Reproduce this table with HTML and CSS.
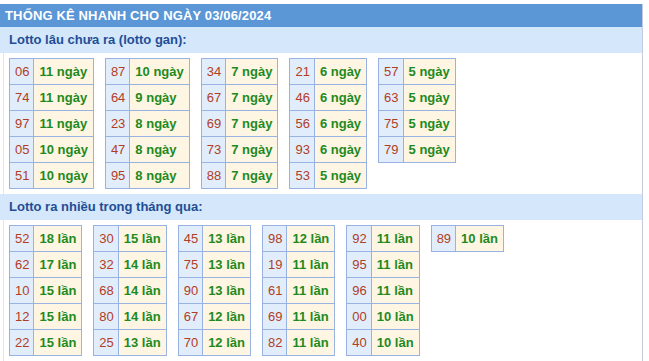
FILE: index.html
```html
<!DOCTYPE html>
<html lang="vi">
<head>
<meta charset="utf-8">
<link rel="stylesheet" href="styles.css">
</head>
<body>
<div class="box">
  <div class="title">THỐNG KÊ NHANH CHO NGÀY 03/06/2024</div>
  <div class="sub">Lotto lâu chưa ra (lotto gan):</div>
  <div class="tables">
    <table><tr><td class="n">06</td><td class="v">11 ngày</td></tr><tr><td class="n">74</td><td class="v">11 ngày</td></tr><tr><td class="n">97</td><td class="v">11 ngày</td></tr><tr><td class="n">05</td><td class="v">10 ngày</td></tr><tr><td class="n">51</td><td class="v">10 ngày</td></tr></table>
    <table><tr><td class="n">87</td><td class="v">10 ngày</td></tr><tr><td class="n">64</td><td class="v">9 ngày</td></tr><tr><td class="n">23</td><td class="v">8 ngày</td></tr><tr><td class="n">47</td><td class="v">8 ngày</td></tr><tr><td class="n">95</td><td class="v">8 ngày</td></tr></table>
    <table><tr><td class="n">34</td><td class="v">7 ngày</td></tr><tr><td class="n">67</td><td class="v">7 ngày</td></tr><tr><td class="n">69</td><td class="v">7 ngày</td></tr><tr><td class="n">73</td><td class="v">7 ngày</td></tr><tr><td class="n">88</td><td class="v">7 ngày</td></tr></table>
    <table><tr><td class="n">21</td><td class="v">6 ngày</td></tr><tr><td class="n">46</td><td class="v">6 ngày</td></tr><tr><td class="n">56</td><td class="v">6 ngày</td></tr><tr><td class="n">93</td><td class="v">6 ngày</td></tr><tr><td class="n">53</td><td class="v">5 ngày</td></tr></table>
    <table><tr><td class="n">57</td><td class="v">5 ngày</td></tr><tr><td class="n">63</td><td class="v">5 ngày</td></tr><tr><td class="n">75</td><td class="v">5 ngày</td></tr><tr><td class="n">79</td><td class="v">5 ngày</td></tr></table>
  </div>
  <div class="sub">Lotto ra nhiều trong tháng qua:</div>
  <div class="tables">
    <table><tr><td class="n">52</td><td class="v">18 lần</td></tr><tr><td class="n">62</td><td class="v">17 lần</td></tr><tr><td class="n">10</td><td class="v">15 lần</td></tr><tr><td class="n">12</td><td class="v">15 lần</td></tr><tr><td class="n">22</td><td class="v">15 lần</td></tr></table>
    <table><tr><td class="n">30</td><td class="v">15 lần</td></tr><tr><td class="n">32</td><td class="v">14 lần</td></tr><tr><td class="n">68</td><td class="v">14 lần</td></tr><tr><td class="n">80</td><td class="v">14 lần</td></tr><tr><td class="n">25</td><td class="v">13 lần</td></tr></table>
    <table><tr><td class="n">45</td><td class="v">13 lần</td></tr><tr><td class="n">75</td><td class="v">13 lần</td></tr><tr><td class="n">90</td><td class="v">13 lần</td></tr><tr><td class="n">67</td><td class="v">12 lần</td></tr><tr><td class="n">70</td><td class="v">12 lần</td></tr></table>
    <table><tr><td class="n">98</td><td class="v">12 lần</td></tr><tr><td class="n">19</td><td class="v">11 lần</td></tr><tr><td class="n">61</td><td class="v">11 lần</td></tr><tr><td class="n">69</td><td class="v">11 lần</td></tr><tr><td class="n">82</td><td class="v">11 lần</td></tr></table>
    <table><tr><td class="n">92</td><td class="v">11 lần</td></tr><tr><td class="n">95</td><td class="v">11 lần</td></tr><tr><td class="n">96</td><td class="v">11 lần</td></tr><tr><td class="n">00</td><td class="v">10 lần</td></tr><tr><td class="n">40</td><td class="v">10 lần</td></tr></table>
    <table><tr><td class="n">89</td><td class="v">10 lần</td></tr></table>
  </div>
</div>
</body>
</html>
```
FILE: styles.css
```css
html, body {
  margin: 0;
  padding: 0;
  background: #ffffff;
}
body {
  padding-top: 4px;
  font-family: "Liberation Sans", Arial, sans-serif;
  font-size: 13px;
}
.box {
  width: 642px;
  border-right: 1px solid #c3cbe0;
  padding-bottom: 6px;
  background: linear-gradient(#e4e7f0, #e4e7f0) no-repeat 3px 0 / 1px 100%;
}
.title {
  height: 23px;
  line-height: 23px;
  background: #5b96d6;
  color: #ffffff;
  font-weight: bold;
  padding-left: 5px;
  letter-spacing: 0.15px;
}
.sub {
  height: 26px;
  line-height: 26px;
  background: #d5e7fa;
  color: #1f4e96;
  font-weight: bold;
  padding-left: 9px;
}
.tables {
  display: flex;
  align-items: flex-start;
  gap: 11px;
  padding: 5px 0 5px 9px;
}
table {
  border-collapse: collapse;
}
td {
  border: 1px solid #98b2e2;
  height: 25px;
  white-space: nowrap;
}
td.n {
  background: #e2edfb;
  color: #b03d26;
  padding: 0 4px 0 5px;
}
td.v {
  background: #fef5e3;
  color: #1e8a1e;
  font-weight: bold;
  padding: 0 5px;
}
```
